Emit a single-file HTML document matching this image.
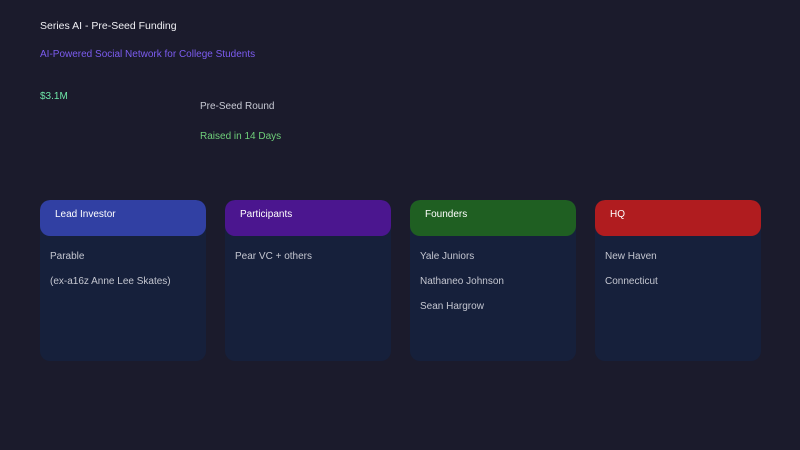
<!DOCTYPE html><html><head><style>
body{margin:0;width:800px;height:450px;background:#1b1b2c;font-family:"Liberation Sans",sans-serif;font-size:10px;position:relative;overflow:hidden}
.t{position:absolute;white-space:nowrap;line-height:12px}
.c{position:absolute;top:200px;width:166px;height:161px;background:#16203b;border-radius:10px;overflow:hidden}
.h{height:36px;border-radius:10px;color:#fff;padding-left:15px;line-height:30px;box-sizing:border-box}
.b{color:#c4c6d0;padding-left:10px}
.b div{position:absolute;left:10px}
</style></head><body>
<div class="t" style="left:40px;top:20px;color:#f0f0f4;font-size:10.5px">Series AI - Pre-Seed Funding</div>
<div class="t" style="left:40px;top:49px;color:#7c5cf0">AI-Powered Social Network for College Students</div>
<div class="t" style="left:40px;top:91px;color:#6ee7a8">$3.1M</div>
<div class="t" style="left:200px;top:101px;color:#c8cad4">Pre-Seed Round</div>
<div class="t" style="left:200px;top:131px;color:#6fcf7a">Raised in 14 Days</div>
<div class="c" style="left:40px"><div class="h" style="background:#3140a3">Lead Investor</div><div class="b"><div style="top:51px">Parable</div><div style="top:76px">(ex-a16z Anne Lee Skates)</div></div></div>
<div class="c" style="left:225px"><div class="h" style="background:#4b168f">Participants</div><div class="b"><div style="top:51px">Pear VC + others</div></div></div>
<div class="c" style="left:410px"><div class="h" style="background:#1f5f22">Founders</div><div class="b"><div style="top:51px">Yale Juniors</div><div style="top:76px">Nathaneo Johnson</div><div style="top:101px">Sean Hargrow</div></div></div>
<div class="c" style="left:595px"><div class="h" style="background:#b01c1f">HQ</div><div class="b"><div style="top:51px">New Haven</div><div style="top:76px">Connecticut</div></div></div>
</body></html>
